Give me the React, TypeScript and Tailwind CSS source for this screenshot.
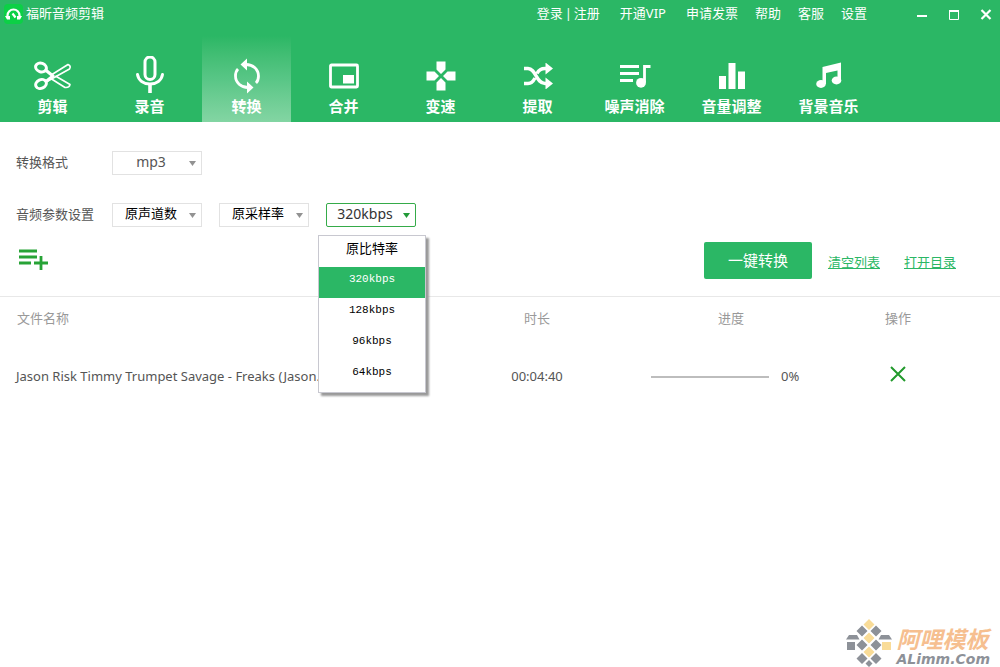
import { useState, type ReactNode } from 'react';
import clsx from 'clsx';

const tools: { name: string; icon: ReactNode }[] = [
    {
        name: '剪辑',
        icon: (
            <svg width="38" height="30" viewBox="0 0 38 30" fill="none" stroke="currentColor" strokeLinejoin="round">
                <ellipse cx="7" cy="6.500" rx="5.500" ry="4.300" strokeWidth="3" transform="rotate(20 7 6.500)" />
                <ellipse cx="7" cy="23" rx="5.500" ry="4.300" strokeWidth="3" transform="rotate(-25 7 23)" />
                <path d="M18 13.500 34 3.500q3.500 1.500 1.500 4.500L13 20.500" strokeWidth="1.600" />
                <path d="M16 17 31 26.500q4.500.5 5-3L21.500 15" strokeWidth="1.600" />
                <path d="M11.500 9 19 15 12 20.500" strokeWidth="3.200" />
            </svg>
        ),
    },
    {
        name: '录音',
        icon: (
            <svg width="30" height="40" viewBox="0 0 30 40" fill="none" stroke="currentColor" strokeWidth="3">
                <rect x="10" y="1" width="10" height="22.500" rx="5" />
                <path d="M2.500 18.500c1 6 6 9.500 12.500 9.500s11.500-3.500 12.500-9.500" strokeLinecap="round" />
                <path d="M15 28v9" strokeWidth="3.600" />
            </svg>
        ),
    },
    {
        name: '转换',
        icon: (
            <svg width="28" height="36" viewBox="0 0 28 36" fill="none" stroke="currentColor" strokeWidth="2.800">
                <path d="M13 6.500c7 0 12.500 5 12.500 11.500 0 3-1 5.500-2.500 7" />
                <path d="M15 29.500C8 29.500 2.500 24.500 2.500 18c0-3 1-5.500 2.500-7" />
                <path d="M7.500 6.500 14 .5v12zM20.500 29.500 14 23.500v12z" fill="currentColor" stroke="none" />
            </svg>
        ),
    },
    {
        name: '合并',
        icon: (
            <svg width="30" height="26" viewBox="0 0 30 26" fill="none">
                <rect x="1.500" y="2" width="27" height="22" rx="1" stroke="currentColor" strokeWidth="2.800" />
                <path d="M14 12h11v8.500H14z" fill="currentColor" />
            </svg>
        ),
    },
    {
        name: '变速',
        icon: (
            <svg width="30" height="30" viewBox="0 0 30 30" fill="currentColor">
                <path d="M10.500.5h9v8L15 13l-4.500-4.500zM10.500 29.500h9v-8L15 17l-4.500 4.500zM.5 10.500v9h8L13 15l-4.500-4.500zM29.500 10.500v9h-8L17 15l4.500-4.500z" />
            </svg>
        ),
    },
    {
        name: '提取',
        icon: (
            <svg width="30" height="26" viewBox="0 0 30 26" fill="none" stroke="currentColor" strokeWidth="3.400">
                <path d="M1 5.500h4c8 0 8 15 17 15h2M1 20.500h4c3.500 0 5.500-2.500 7-5.500M14 10.500c1.500-3 4-5 8-5h2" />
                <path d="M22.500-.5 30 5.500l-7.500 6zM22.500 14.500l7.500 6-7.500 6z" fill="currentColor" stroke="none" />
            </svg>
        ),
    },
    {
        name: '噪声消除',
        icon: (
            <svg width="32" height="24" viewBox="0 0 32 24" fill="none" stroke="currentColor" strokeWidth="2.800">
                <path d="M1 2.500h19M1 9.500h19M1 16.500h13M31.500 2.500H25.500v16" />
                <circle cx="22" cy="18.800" r="4.900" fill="currentColor" stroke="none" />
            </svg>
        ),
    },
    {
        name: '音量调整',
        icon: (
            <svg width="26" height="26" viewBox="0 0 26 26" fill="currentColor">
                <path d="M0 13h7v13H0zM9.500 0h7v26h-7zM19 8.500h7V26h-7z" />
            </svg>
        ),
    },
    {
        name: '背景音乐',
        icon: (
            <svg width="28" height="28" viewBox="0 0 28 28" fill="currentColor">
                <path d="M7.500 5 26 .5v18h-3.500V8.500L11 11v11H7.500z" />
                <ellipse cx="6" cy="22" rx="4.800" ry="3.900" />
                <ellipse cx="21.500" cy="18.500" rx="4.800" ry="3.900" />
            </svg>
        ),
    },
];

const bitrates = ['原比特率', '320kbps', '128kbps', '96kbps', '64kbps'];

const files = [{ name: 'Jason Risk Timmy Trumpet Savage - Freaks (Jason...', duration: '00:04:40', progress: 0 }];

interface SelectBoxProps {
    label: string;
    options: string[];
    value?: string;
    onChange?: (value: string) => void;
    className: string;
    active?: boolean;
}

function SelectBox({ label, options, value, onChange, className, active }: SelectBoxProps) {
    return (
        <div className="relative w-[90px]">
            <select
                aria-label={label}
                value={value}
                onChange={e => onChange?.(e.target.value)}
                className={clsx(
                    'block w-full h-6 appearance-none border bg-white pl-0 pr-3 pb-1 [text-align-last:center] outline-none',
                    active ? 'border-[#35ab49] rounded-xs' : 'border-[#e2e2e2]',
                    className
                )}
            >
                {options.map(o => (
                    <option key={o}>{o}</option>
                ))}
            </select>
            <svg
                className={clsx('pointer-events-none absolute right-1.5 top-2.5', active ? 'text-[#229a38]' : 'text-[#929292]')}
                width="7"
                height="5"
                viewBox="0 0 7 5"
                fill="currentColor"
            >
                <path d="M0 0h7L3.500 5z" />
            </svg>
        </div>
    );
}

function Watermark() {
    return (
        <div className="flex items-center gap-1">
            <svg width="46" height="48" viewBox="0 0 46 48">
                <g fill="#f9dc98">
                    <path d="m23 0 5.500 5.500L23 11l-5.500-5.500zM23 13.500l5.500 5.500-5.500 5.500-5.500-5.500zM23 27.500l5.500 5.500-5.500 5.500-5.500-5.500z" />
                    <path d="M36 23h9v8h-9z" />
                </g>
                <g fill="#8d9198">
                    <path d="m16 6.500 5.500 5.500-5.500 5.500-5.500-5.500zM30 6.500l5.500 5.500-5.500 5.500-5.500-5.500zM16 20.500l5.500 5.500-5.500 5.500-5.500-5.500zM30 20.500l5.500 5.500-5.500 5.500-5.500-5.500zM16 34l5.500 5.500L16 45l-5.500-5.500zM30 34l5.500 5.500L30 45l-5.500-5.500zM23 41l3.500 3.500L23 48l-3.500-3.500z" />
                    <path d="M1 23h8v8H1zM0 20.500 3 16h8l2.500 4.500zM46 20.500 43 16h-8l-2.500 4.500z" />
                </g>
            </svg>
            <div className="pt-2 font-bold italic">
                <p className="text-[23px] leading-6 text-[#f6bf90]">阿哩模板</p>
                <p className="text-sm leading-4 text-[#8d9198] font-['DejaVu_Sans',sans-serif]">ALimm.Com</p>
            </div>
        </div>
    );
}

export default function App() {
    const [tool, setTool] = useState('转换');
    const [bitrate, setBitrate] = useState('320kbps');
    const [open, setOpen] = useState(true);

    const pickBitrate = (value: string) => {
        setBitrate(value);
        setOpen(false);
    };

    return (
        <div className="min-h-screen flex flex-col bg-white text-[13px] text-[#555] font-['Noto_Sans','Noto_Sans_CJK_SC',sans-serif]">
            <header className="bg-[#2bb765] text-white">
                {/* Title bar */}
                <div className="flex items-center h-7 pl-1 pr-2">
                    <div className="flex items-center gap-[3px]">
                        <span className="flex items-center justify-center w-[19px] h-5 rounded-sm bg-[#0cd046]">
                            <svg width="17" height="14" viewBox="0 0 17 14" fill="none" stroke="currentColor" strokeWidth="2.200">
                                <path d="M2.500 10V8.500a6 6 0 0 1 12 0V10" />
                                <path d="M0 9h5v3.500H2zM12 9h5l-2 3.500h-3z" fill="currentColor" stroke="none" />
                                <path d="m7.500 6.500 3 4" />
                            </svg>
                        </span>
                        <h1>福昕音频剪辑</h1>
                    </div>
                    <nav className="ml-auto flex items-center">
                        <a href="#login">登录</a>
                        <span className="px-0.5">|</span>
                        <a href="#register" className="mr-5">注册</a>
                        <a href="#vip" className="mr-5">开通VIP</a>
                        <a href="#invoice" className="mr-[17px]">申请发票</a>
                        <a href="#help" className="mr-[17px]">帮助</a>
                        <a href="#service" className="mr-[17px]">客服</a>
                        <a href="#settings" className="mr-[49px]">设置</a>
                    </nav>
                    <div className="flex items-center gap-5">
                        <button aria-label="最小化">
                            <svg width="12" height="12" viewBox="0 0 12 12" stroke="currentColor" strokeWidth="2">
                                <path d="M1 8h10" />
                            </svg>
                        </button>
                        <button aria-label="最大化">
                            <svg width="12" height="12" viewBox="0 0 12 12" fill="none" stroke="currentColor">
                                <path d="M1.500 3.500h9v8h-9z" />
                                <path d="M1 3h10" strokeWidth="2" />
                            </svg>
                        </button>
                        <button aria-label="关闭">
                            <svg width="12" height="12" viewBox="0 0 12 12" stroke="currentColor" strokeWidth="2.200">
                                <path d="m1.500 2 9 9M10.500 2l-9 9" />
                            </svg>
                        </button>
                    </div>
                </div>

                {/* Tools */}
                <div className="flex gap-2 px-2 pt-2">
                    {tools.map(t => (
                        <button
                            key={t.name}
                            onClick={() => setTool(t.name)}
                            className={clsx(
                                'flex flex-col items-center w-[89px] h-[86px] pt-[19px] text-[15px] font-semibold',
                                tool === t.name && 'bg-linear-to-t from-[#83d5a3] via-[#58c686] to-[#2bb765]'
                            )}
                        >
                            <span className="flex items-center justify-center h-[41px]">{t.icon}</span>
                            <span className="leading-5">{t.name}</span>
                        </button>
                    ))}
                </div>
            </header>

            {/* Format settings */}
            <section className="px-4 pt-[29px]">
                <div className="flex items-center gap-[17px]">
                    <span className="w-[79px]">转换格式</span>
                    <SelectBox label="转换格式" options={['mp3', 'wav', 'flac']} className="text-sm" />
                </div>
                <div className="flex items-center gap-[17px] mt-7">
                    <span className="w-[79px]">音频参数设置</span>
                    <SelectBox label="声道" options={['原声道数', '单声道', '立体声']} className="text-[13px] text-black" />
                    <SelectBox label="采样率" options={['原采样率', '44100', '48000']} className="text-[13px] text-black" />
                    <div className="relative">
                        <SelectBox
                            label="比特率"
                            options={bitrates}
                            value={bitrate}
                            onChange={setBitrate}
                            className="text-sm text-[#333]"
                            active
                        />
                        {open && (
                            <ul
                                role="listbox"
                                aria-label="比特率"
                                className="absolute z-10 top-8 -left-2 w-[108px] h-[158px] border border-[#c8c8d0] bg-white shadow-[3px_3px_2px_#999]"
                            >
                                {bitrates.map((b, i) => (
                                    <li key={b} role="option" aria-selected={b === bitrate}>
                                        <button
                                            onClick={() => pickBitrate(b)}
                                            className={clsx(
                                                'block w-full h-[31px] pb-2 text-center leading-5',
                                                i === 0 ? 'text-[13px]' : "text-[11px] font-['Liberation_Mono',monospace]",
                                                b === bitrate ? 'bg-[#2bb765] text-white' : 'text-black'
                                            )}
                                        >
                                            {b}
                                        </button>
                                    </li>
                                ))}
                            </ul>
                        )}
                    </div>
                </div>
            </section>

            {/* Actions */}
            <div className="flex items-center gap-4 mt-[15px] pl-[19px] pr-11 pb-[17px]">
                <button aria-label="添加文件">
                    <svg width="30" height="24" viewBox="0 0 30 24" stroke="#27a336" strokeWidth="2.800">
                        <path d="M0 2h18M0 8h18M0 14h12M15 14h14M22 7v14" />
                    </svg>
                </button>
                <button className="ml-auto w-[108px] h-[37px] rounded-xs bg-[#2bb765] text-[15px] text-white">一键转换</button>
                <a href="#clear" className="pt-1 text-[#2bb765] underline">清空列表</a>
                <a href="#folder" className="ml-2 pt-1 text-[#2bb765] underline">打开目录</a>
            </div>

            {/* File list */}
            <div className="border-t border-[#e8e8e8] pr-8">
                <table className="w-full table-fixed">
                    <thead className="text-[#999]">
                        <tr className="h-11">
                            <th className="pl-[17px] text-left font-normal">文件名称</th>
                            <th className="w-[194px] font-normal">时长</th>
                            <th className="w-[194px] font-normal">进度</th>
                            <th className="w-[140px] font-normal">操作</th>
                        </tr>
                    </thead>
                    <tbody>
                        {files.map(f => (
                            <tr key={f.name} className="h-[72px]">
                                <td className="pl-4 truncate">{f.name}</td>
                                <td className="text-center">{f.duration}</td>
                                <td className="pl-[17px]">
                                    <div className="flex items-center gap-3">
                                        <div role="progressbar" aria-label="进度" aria-valuenow={f.progress} className="w-[118px] h-0.5 bg-[#bdbdbd]">
                                            <div className="h-full bg-[#2bb765]" style={{ width: `${f.progress}%` }} />
                                        </div>
                                        <span>{f.progress}%</span>
                                    </div>
                                </td>
                                <td className="text-center">
                                    <button aria-label="删除" className="pb-1">
                                        <svg width="16" height="16" viewBox="0 0 16 16" stroke="#229a2c" strokeWidth="2">
                                            <path d="m1 1 14 14M15 1 1 15" />
                                        </svg>
                                    </button>
                                </td>
                            </tr>
                        ))}
                    </tbody>
                </table>
            </div>

            <footer className="mt-auto flex justify-end pr-2.5">
                <Watermark />
            </footer>
        </div>
    );
}
